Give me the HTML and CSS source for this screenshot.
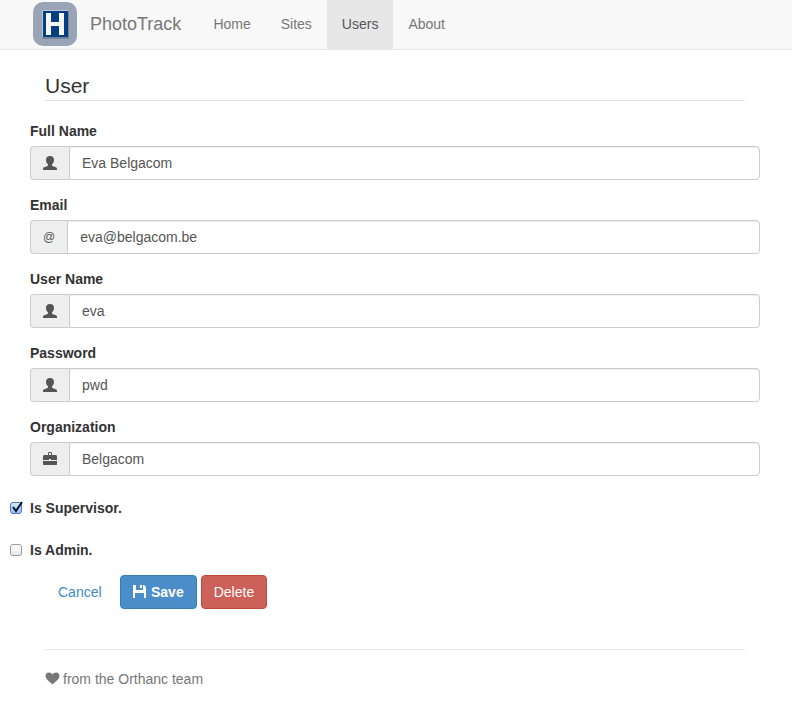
FILE: index.html
```html
<!DOCTYPE html>
<html lang="en">
<head>
<meta charset="utf-8">
<meta name="viewport" content="width=device-width, initial-scale=1">
<title>PhotoTrack</title>
<link rel="stylesheet" href="styles.css">
</head>
<body>
<svg class="sprite" aria-hidden="true">
  <symbol id="icon-user" viewBox="0 0 14 14">
    <path d="M7 0C4.300 0 3 1.500 3 4c0 2 .8 3.400 2 4.300V9.300c0 .5-.4.8-1 1L1.200 11.200C.4 11.500 0 12 0 12.700V14h14v-1.300c0-.7-.4-1.200-1.200-1.500L10 10.300c-.6-.2-1-.5-1-1V8.300c1.200-.9 2-2.300 2-4.300 0-2.500-1.300-4-4-4z"/>
  </symbol>
  <symbol id="icon-briefcase" viewBox="0 0 14 14">
    <path fill-rule="evenodd" d="M5 3V1.800C5 1.200 5.300 0 5.800 0h2.400c.5 0 .8 1.200.8 1.800V3h3.500c.9 0 1.500.6 1.500 1.500V8H8V7H6v1H0V4.500C0 3.600.6 3 1.500 3zM6 1v2h2V1z"/>
    <path d="M0 9h14v3.200c0 .5-.3.800-.8.800H.8c-.5 0-.8-.3-.8-.8z"/>
  </symbol>
  <symbol id="icon-save" viewBox="0 0 13 13">
    <path d="M0 0h3v5h7V0h1l2 2v11h-2V8H2v5H0zM7 0h2v3H7z"/>
  </symbol>
  <symbol id="icon-heart" viewBox="0 0 14 13">
    <path d="M7 12.500C4.500 10 0 7.200 0 3.700 0 1.700 1.500.4 3.400.4 5 .4 6.300 1.200 7 2.500 7.700 1.200 9 .4 10.600.4 12.500.4 14 1.700 14 3.700c0 3.500-4.500 6.300-7 8.800z"/>
  </symbol>
</svg>

<header class="navbar">
  <nav class="nav" aria-label="Main">
    <a class="brand" href="#">
      <svg class="logo" viewBox="0 0 44 44" aria-hidden="true">
        <rect width="44" height="44" rx="10" fill="#99a5b7"/>
        <rect x="9" y="9" width="27" height="28" rx="1" fill="#73839b"/>
        <rect x="9" y="8" width="26" height="27" fill="#b8c7da"/>
        <rect x="10" y="9" width="25" height="26" fill="#04407f"/>
        <path d="M13 11h5v9h8v-9h5v22h-5v-9h-8v9h-5z" fill="#f8f8f8"/>
      </svg>
      <span>PhotoTrack</span>
    </a>
    <a class="nav-link" href="#">Home</a>
    <a class="nav-link" href="#">Sites</a>
    <a class="nav-link active" href="#" aria-current="page">Users</a>
    <a class="nav-link" href="#">About</a>
  </nav>
</header>

<main class="container">
  <h1 class="title">User</h1>
  <form>
    <div class="field">
      <label for="fullname">Full Name</label>
      <div class="group">
        <span class="addon"><svg class="icon" aria-hidden="true"><use href="#icon-user"/></svg></span>
        <input id="fullname" type="text" value="Eva Belgacom">
      </div>
    </div>
    <div class="field">
      <label for="email">Email</label>
      <div class="group">
        <span class="addon at">@</span>
        <input id="email" type="email" value="eva@belgacom.be">
      </div>
    </div>
    <div class="field">
      <label for="username">User Name</label>
      <div class="group">
        <span class="addon"><svg class="icon" aria-hidden="true"><use href="#icon-user"/></svg></span>
        <input id="username" type="text" value="eva">
      </div>
    </div>
    <div class="field">
      <label for="password">Password</label>
      <div class="group">
        <span class="addon"><svg class="icon" aria-hidden="true"><use href="#icon-user"/></svg></span>
        <input id="password" type="text" value="pwd">
      </div>
    </div>
    <div class="field">
      <label for="organization">Organization</label>
      <div class="group">
        <span class="addon"><svg class="icon" aria-hidden="true"><use href="#icon-briefcase"/></svg></span>
        <input id="organization" type="text" value="Belgacom">
      </div>
    </div>
    <div class="check">
      <span class="tick">
        <input id="supervisor" type="checkbox" checked>
        <svg class="mark" viewBox="0 0 14 14" aria-hidden="true"><path d="M3 7l3 4L12 2"/></svg>
      </span>
      <label for="supervisor">Is Supervisor.</label>
    </div>
    <div class="check">
      <span class="tick">
        <input id="admin" type="checkbox">
        <svg class="mark" viewBox="0 0 14 14" aria-hidden="true"><path d="M3 7l3 4L12 2"/></svg>
      </span>
      <label for="admin">Is Admin.</label>
    </div>
    <div class="actions">
      <a class="btn link" href="#">Cancel</a>
      <button class="btn primary" type="submit"><svg class="disk" aria-hidden="true"><use href="#icon-save"/></svg>Save</button>
      <button class="btn danger" type="button">Delete</button>
    </div>
  </form>
  <footer class="footer"><svg class="heart" aria-hidden="true"><use href="#icon-heart"/></svg>from the Orthanc team</footer>
</main>
</body>
</html>
```
FILE: styles.css
```css
* {
  box-sizing: border-box;
}

body {
  margin: 0;
  background: #fff;
  color: #333;
  font: 14px/20px "Liberation Sans", Arial, sans-serif;
}

a {
  text-decoration: none;
}

.sprite {
  display: none;
}

.navbar {
  background: #f8f8f8;
  border-bottom: 1px solid #e7e7e7;
}

.nav {
  display: flex;
  padding-left: 33px;
}

.brand {
  display: flex;
  align-items: center;
  gap: 13px;
  height: 49px;
  padding: 0 17px 1px 0;
  color: #777;
  font-size: 18px;
}

.logo {
  width: 44px;
  height: 44px;
}

.nav-link {
  padding: 14px 15px 15px;
  color: #777;
}

.nav-link.active {
  background: #e7e7e7;
  color: #555;
}

.container {
  padding: 0 32px 0 30px;
}

.title {
  margin: 20px 15px;
  padding: 5px 0 3px;
  border-bottom: 1px solid #e5e5e5;
  font-size: 21px;
  font-weight: 400;
  line-height: 22px;
}

.field {
  margin-bottom: 15px;
}

.field label {
  display: block;
  margin-bottom: 5px;
  font-weight: 700;
}

.group {
  display: flex;
  height: 34px;
}

.addon {
  display: flex;
  align-items: center;
  padding: 0 12px;
  border: 1px solid #ccc;
  border-right: 0;
  border-radius: 4px 0 0 4px;
  background: #eee;
  color: #555;
}

.at {
  font-size: 12px;
}

.icon {
  width: 14px;
  height: 14px;
  fill: currentColor;
}

.group input {
  flex: 1;
  min-width: 0;
  padding: 0 12px;
  border: 1px solid #ccc;
  border-radius: 0 4px 4px 0;
  background: #fff;
  box-shadow: inset 0 1px 1px rgba(0, 0, 0, 0.075);
  color: #555;
  font: inherit;
}

.check {
  display: flex;
  align-items: center;
  gap: 8px;
  height: 34px;
  margin: 0 0 8px -20px;
  font-weight: 700;
}

.tick {
  position: relative;
  display: flex;
}

.tick input {
  appearance: none;
  width: 12px;
  height: 12px;
  margin: 0;
  border: 1px solid #999;
  border-radius: 3px;
  background: linear-gradient(#fff, #e8e8e8);
}

.tick input:checked {
  border-color: #5574b5;
  background: linear-gradient(#d8eafc, #8fc3f5);
}

.mark {
  position: absolute;
  left: 0;
  bottom: 0;
  display: none;
  width: 14px;
  height: 14px;
  fill: none;
  stroke: #061332;
  stroke-width: 2;
}

.tick input:checked + .mark {
  display: block;
}

.actions {
  display: flex;
  gap: 4px;
  padding-left: 15px;
}

.btn {
  display: flex;
  align-items: center;
  height: 34px;
  padding: 0 12px;
  border: 1px solid transparent;
  border-radius: 4px;
  color: #fff;
  font: inherit;
}

.link {
  min-width: 71px;
  color: #428bca;
}

.primary {
  gap: 5px;
  background: #4b8dc9;
  border-color: #357ebd;
  font-weight: 700;
}

.disk {
  width: 13px;
  height: 13px;
  margin-bottom: 2px;
  fill: currentColor;
}

.danger {
  background: #cd6058;
  border-color: #c24a42;
}

.footer {
  display: flex;
  align-items: center;
  gap: 3px;
  margin: 40px 15px 0;
  padding: 19px 0;
  border-top: 1px solid #e5e5e5;
  color: #777;
}

.heart {
  width: 15px;
  height: 13px;
  margin-bottom: 2px;
  fill: currentColor;
}
```
